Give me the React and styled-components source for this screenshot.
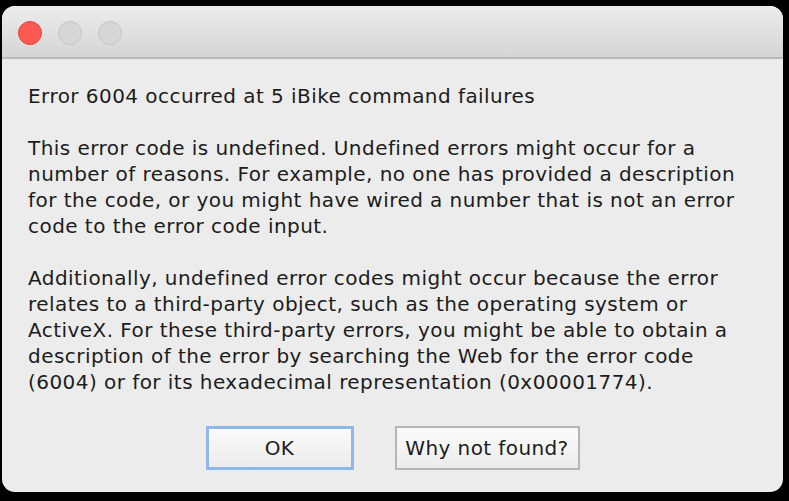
import styled, { createGlobalStyle } from "styled-components";

const GlobalStyle = createGlobalStyle`
  html, body {
    margin: 0;
    padding: 0;
    background: #000;
  }
  body {
    width: 789px;
    height: 501px;
    overflow: hidden;
    font-family: "DejaVu Sans", Verdana, sans-serif;
  }
`;

const Screen = styled.div`
  width: 789px;
  height: 501px;
  background: #000;
  padding: 6px 6px 9px 2px;
  box-sizing: border-box;
  display: flex;
`;

const Window = styled.div`
  flex: 1;
  display: flex;
  flex-direction: column;
  background: #ececec;
  border-radius: 13px;
  overflow: hidden;
`;

const TitleBar = styled.div`
  height: 53px;
  flex-shrink: 0;
  display: flex;
  align-items: center;
  gap: 16px;
  padding: 2px 0 0 16px;
  box-sizing: border-box;
  background: linear-gradient(#ececec, #d5d5d5);
  border-bottom: 2px solid #b9b9b9;
`;

const Light = styled.span`
  width: 24px;
  height: 24px;
  border-radius: 50%;
  box-sizing: border-box;
  background: ${(p) => (p.$red ? "#fd5a52" : "#d6d6d6")};
  border: 1px solid ${(p) => (p.$red ? "#e0443d" : "#c4c4c4")};
`;

const Body = styled.div`
  flex: 1;
  display: flex;
  flex-direction: column;
  padding: 24px 0 0 26px;
  color: #1c1c1c;
  font-size: 20px;
  letter-spacing: 0.45px;
  line-height: 26px;
`;

const Para = styled.p`
  margin: 0 0 26px 0;
  white-space: nowrap;
`;

const Buttons = styled.div`
  display: flex;
  justify-content: center;
  gap: 41px;
  margin: 5px 0 0 -26px;
`;

const Button = styled.button`
  height: 44px;
  box-sizing: border-box;
  font-family: "DejaVu Sans", Verdana, sans-serif;
  font-size: 20px;
  letter-spacing: 0.4px;
  color: #1c1c1c;
  background: linear-gradient(#fafafa, #ececec);
  border: ${(p) => (p.$primary ? "3px solid #8fb8ea" : "2px solid #b5b5b5")};
  width: ${(p) => p.$w}px;
  padding: 0;
`;

export default function App() {
  return (
    <>
      <GlobalStyle />
      <Screen>
        <Window>
          <TitleBar>
            <Light $red />
            <Light />
            <Light />
          </TitleBar>
          <Body>
            <Para>Error 6004 occurred at 5 iBike command failures</Para>
            <Para>
              This error code is undefined. Undefined errors might occur for a
              <br />
              number of reasons. For example, no one has provided a description
              <br />
              for the code, or you might have wired a number that is not an error
              <br />
              code to the error code input.
            </Para>
            <Para>
              Additionally, undefined error codes might occur because the error
              <br />
              relates to a third-party object, such as the operating system or
              <br />
              ActiveX. For these third-party errors, you might be able to obtain a
              <br />
              description of the error by searching the Web for the error code
              <br />
              (6004) or for its hexadecimal representation (0x00001774).
            </Para>
            <Buttons>
              <Button $primary $w={148}>OK</Button>
              <Button $w={185}>Why not found?</Button>
            </Buttons>
          </Body>
        </Window>
      </Screen>
    </>
  );
}
